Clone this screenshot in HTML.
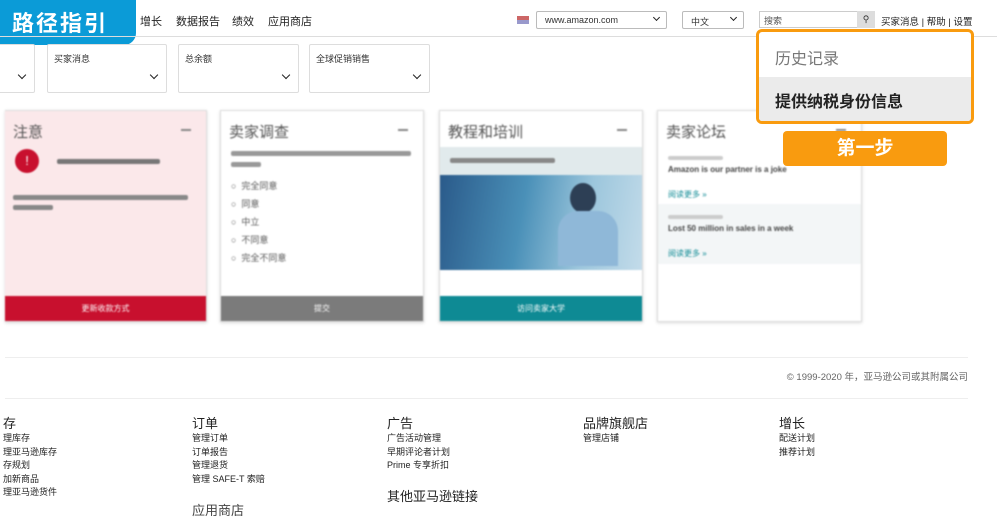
<!DOCTYPE html>
<html><head><meta charset="utf-8"><style>
*{margin:0;padding:0;box-sizing:border-box}
body{width:997px;height:514px;overflow:hidden;background:#fff;position:relative;font-family:"Liberation Sans","Noto Sans CJK SC",sans-serif;color:#333}
.a{position:absolute}
.nav{font-size:11px;top:13px;color:#222}
.dd{position:absolute;top:44px;height:49px;border:1px solid #ddd;border-radius:2px;font-size:9px;padding:7px 6px;color:#333}
.chev{position:absolute;right:9px;bottom:14px;width:6px;height:6px;border-right:1.5px solid #222;border-bottom:1.5px solid #222;transform:rotate(45deg)}
.card{position:absolute;top:110px;height:212px;border:1px solid #ddd;box-shadow:0 1px 3px rgba(0,0,0,.15);filter:blur(0.8px);overflow:hidden}
.card h3{font-weight:normal;font-size:15px;color:#555;position:absolute;left:8px;top:10px}
.minus{position:absolute;right:15px;top:18px;width:10px;height:2px;background:#888}
.btn{position:absolute;left:0;right:0;bottom:0;height:25px;color:#fff;font-size:8px;text-align:center;line-height:25px}
.blk{position:absolute;height:5px;background:#777;border-radius:2px}
.fh{position:absolute;top:413px;font-size:13px;color:#222}
.fl{position:absolute;font-size:9px;color:#222;line-height:13.6px}
</style></head><body>
<div class="a" style="left:0;top:0;width:136px;height:45px;background:#0b9bd7;border-bottom-right-radius:12px;color:#fff;font-size:22px;font-weight:bold;letter-spacing:2px;line-height:44px;padding-left:12px;font-family:'Noto Sans CJK SC',sans-serif">路径指引</div>
<div class="a nav" style="left:140px">增长</div>
<div class="a nav" style="left:176px">数据报告</div>
<div class="a nav" style="left:232px">绩效</div>
<div class="a nav" style="left:268px">应用商店</div>
<div class="a" style="left:0;top:36px;width:997px;height:1px;background:#ddd"></div>
<div class="a" style="left:517px;top:16px;width:12px;height:8px;background:linear-gradient(#c66 50%,#99c 50%)"></div>
<div class="a" style="left:536px;top:11px;width:131px;height:18px;border:1px solid #bbb;border-radius:2px;font-size:9px;padding:3px 8px">www.amazon.com</div>
<div class="a" style="left:654px;top:15px;width:5px;height:5px;border-right:1.5px solid #222;border-bottom:1.5px solid #222;transform:rotate(45deg)"></div>
<div class="a" style="left:682px;top:11px;width:62px;height:18px;border:1px solid #bbb;border-radius:2px;font-size:9px;padding:3px 8px">中文</div>
<div class="a" style="left:731px;top:15px;width:5px;height:5px;border-right:1.5px solid #222;border-bottom:1.5px solid #222;transform:rotate(45deg)"></div>
<div class="a" style="left:759px;top:11px;width:99px;height:17px;border:1px solid #ccc;font-size:9px;padding:2px 4px;color:#555">搜索</div>
<div class="a" style="left:857px;top:11px;width:18px;height:17px;background:#ddd;font-size:9px;text-align:center;line-height:17px">&#9906;</div>
<div class="a" style="left:881px;top:14px;font-size:9.5px;color:#222">买家消息 | 帮助 | 设置</div>

<div class="dd" style="left:-2px;width:37px"><div class="chev"></div></div>
<div class="dd" style="left:47px;width:120px">买家消息<div class="chev"></div></div>
<div class="dd" style="left:178px;width:121px">总余额<div class="chev"></div></div>
<div class="dd" style="left:309px;width:121px">全球促销销售<div class="chev"></div></div>

<div class="card" style="left:5px;width:202px;background:#fbe8ea;border-left:none">
<h3>注意</h3><div class="minus"></div>
<div class="a" style="left:10px;top:38px;width:24px;height:24px;border-radius:50%;background:#c8102e;color:#fff;text-align:center;font-size:13px;line-height:24px">!</div>
<div class="blk" style="left:52px;top:48px;width:103px"></div>
<div class="blk" style="left:8px;top:84px;width:175px;background:#888"></div>
<div class="blk" style="left:8px;top:94px;width:40px;background:#888"></div>
<div class="btn" style="background:#c8102e">更新收款方式</div></div>

<div class="card" style="left:220px;width:204px">
<h3>卖家调查</h3><div class="minus"></div>
<div class="blk" style="left:10px;top:40px;width:180px;background:#999"></div>
<div class="blk" style="left:10px;top:51px;width:30px;background:#999"></div>
<div class="a" style="left:10px;top:66px;font-size:9px;line-height:18px;color:#555">○ &nbsp;完全同意<br>○ &nbsp;同意<br>○ &nbsp;中立<br>○ &nbsp;不同意<br>○ &nbsp;完全不同意</div>
<div class="btn" style="background:#7b7b7b">提交</div></div>

<div class="card" style="left:439px;width:204px">
<h3>教程和培训</h3><div class="minus"></div>
<div class="a" style="left:0;top:36px;width:204px;height:28px;background:#e1eaec"></div>
<div class="blk" style="left:10px;top:47px;width:105px;background:#888"></div>
<div class="a" style="left:0;top:64px;width:204px;height:95px;background:linear-gradient(100deg,#2a5a8a,#4a90b8 40%,#9cc6dc 70%,#c4dcea)"></div>
<div class="a" style="left:130px;top:72px;width:26px;height:30px;border-radius:50%;background:#2d3f55"></div>
<div class="a" style="left:118px;top:100px;width:60px;height:55px;border-radius:20px 20px 0 0;background:#8fb8d8"></div>
<div class="btn" style="background:#0e8a94">访问卖家大学</div></div>

<div class="card" style="left:657px;width:205px">
<h3>卖家论坛</h3><div class="minus"></div>
<div class="blk" style="left:10px;top:45px;width:55px;background:#ccc;height:4px"></div>
<div class="a" style="left:10px;top:54px;font-size:8px;color:#444;font-weight:bold">Amazon is our partner is a joke</div>
<div class="a" style="left:10px;top:78px;font-size:8px;color:#0e8a94">阅读更多 »</div>
<div class="a" style="left:0;top:93px;width:205px;height:60px;background:#f3f6f7"></div>
<div class="blk" style="left:10px;top:104px;width:55px;background:#ccc;height:4px"></div>
<div class="a" style="left:10px;top:113px;font-size:8px;color:#444;font-weight:bold">Lost 50 million in sales in a week</div>
<div class="a" style="left:10px;top:137px;font-size:8px;color:#0e8a94">阅读更多 »</div></div>

<div class="a" style="left:756px;top:29px;width:218px;height:95px;border:3px solid #f99b0f;border-radius:6px;background:#fff;overflow:hidden">
<div class="a" style="left:16px;top:13px;font-size:16px;color:#777">历史记录</div>
<div class="a" style="left:0;top:45px;width:212px;height:45px;background:#ebebeb"></div>
<div class="a" style="left:16px;top:56px;font-size:16px;font-weight:bold;color:#222">提供纳税身份信息</div></div>
<div class="a" style="left:783px;top:131px;width:164px;height:35px;background:#f99b0f;border-radius:4px;color:#fff;font-size:19px;font-weight:bold;text-align:center;line-height:35px">第一步</div>

<div class="a" style="left:5px;top:357px;width:963px;height:1px;background:#eee"></div>
<div class="a" style="right:29px;top:369px;font-size:9.5px;color:#666">© 1999-2020 年，亚马逊公司或其附属公司</div>
<div class="a" style="left:5px;top:398px;width:963px;height:1px;background:#eee"></div>
<div class="fh" style="left:3px">存</div>
<div class="fh" style="left:192px">订单</div>
<div class="fh" style="left:387px">广告</div>
<div class="fh" style="left:583px">品牌旗舰店</div>
<div class="fh" style="left:779px">增长</div>
<div class="fl" style="left:3px;top:432px">理库存<br>理亚马逊库存<br>存规划<br>加新商品<br>理亚马逊货件</div>
<div class="fl" style="left:192px;top:432px">管理订单<br>订单报告<br>管理退货<br>管理 SAFE-T 索赔</div>
<div class="fl" style="left:387px;top:432px">广告活动管理<br>早期评论者计划<br>Prime 专享折扣</div>
<div class="fl" style="left:583px;top:432px">管理店铺</div>
<div class="fl" style="left:779px;top:432px">配送计划<br>推荐计划</div>
<div class="fh" style="left:387px;top:486px">其他亚马逊链接</div>
<div class="fh" style="left:192px;top:500px;color:#444">应用商店</div>
</body></html>
